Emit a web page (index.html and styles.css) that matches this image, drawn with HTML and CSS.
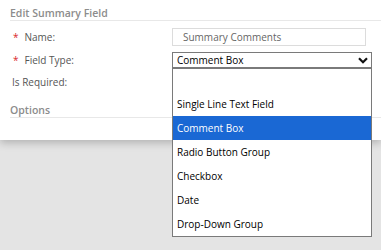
FILE: index.html
```html
<!DOCTYPE html>
<html lang="en">
<head>
  <meta charset="UTF-8" />
  <title>Edit Summary Field</title>
  <link rel="stylesheet" href="styles.css">
</head>
<body>

  <div class="panel">
    <h3 class="section-title">Edit Summary Field</h3>

    <div class="form-row">
      <label class="field-label"><span class="req">*</span>Name:</label>
      <input type="text" class="text-input" value="Summary Comments" />
    </div>

    <div class="form-row select-row">
      <label class="field-label"><span class="req">*</span>Field Type:</label>
      <div class="select">
        <span>Comment Box</span>
        <svg class="chevron" width="10" height="7" viewBox="0 0 10 7">
          <path d="M1 1.2 L5 5.2 L9 1.2" fill="none" stroke="#111" stroke-width="2.2" />
        </svg>
        <ul class="options-list">
          <li></li>
          <li>Single Line Text Field</li>
          <li class="selected">Comment Box</li>
          <li>Radio Button Group</li>
          <li>Checkbox</li>
          <li>Date</li>
          <li>Drop-Down Group</li>
        </ul>
      </div>
    </div>

    <div class="form-row plain-row">
      <label class="field-label">Is Required:</label>
    </div>

    <h3 class="section-title options-title">Options</h3>
  </div>

</body>
</html>
```

FILE: styles.css
```css
html, body {
  height: 100%;
}

body {
  margin: 0;
  background-color: #e4e4e4;
  font-family: "Open Sans", Arial, sans-serif;
  font-size: 10px;
}

.panel {
  position: relative;
  background-color: white;
  height: 140px;
  padding-left: 10px;
  box-sizing: border-box;
  box-shadow: 0 3px 8px rgba(0, 0, 0, 0.22);
}

.section-title {
  margin: 0;
  padding-top: 6px;
  line-height: 14px;
  font-size: 10.5px;
  font-weight: 600;
  color: #8c8c8c;
  border-bottom: 1px solid #e8e8e8;
}

.form-row {
  display: flex;
  align-items: center;
  height: 18px;
  margin-top: 7px;
}

.select-row {
  height: 16px;
  margin-top: 6px;
}

.plain-row {
  margin-top: 5px;
}

.field-label {
  width: 160px;
  padding-left: 2px;
  color: #555;
}

.req {
  color: #d9262b;
  margin: 0 6px 0 1px;
}

.text-input {
  width: 194px;
  height: 18px;
  box-sizing: border-box;
  border: 1px solid #dcdcdc;
  padding: 0 0 0 10px;
  font-family: inherit;
  font-size: 10px;
  color: #666;
  outline: none;
}

.select {
  position: relative;
  width: 200px;
  height: 16px;
  box-sizing: border-box;
  border: 1px solid #7a7a7a;
  display: flex;
  align-items: center;
  justify-content: space-between;
  padding: 0 3px 0 4px;
  color: #000;
}

.chevron {
  display: block;
}

.options-list {
  position: absolute;
  left: -1px;
  top: 14px;
  width: 200px;
  box-sizing: border-box;
  margin: 0;
  padding: 0;
  list-style: none;
  background-color: white;
  border: 1px solid #7a7a7a;
  border-top-width: 2px;
  z-index: 2;
}

.options-list li {
  height: 24px;
  line-height: 24px;
  padding-left: 4px;
  color: #000;
}

.options-list li:first-child {
  height: 23px;
}

.options-list li.selected {
  background-color: #1a68d4;
  color: white;
}

.options-title {
  margin-top: 6px;
}
```
